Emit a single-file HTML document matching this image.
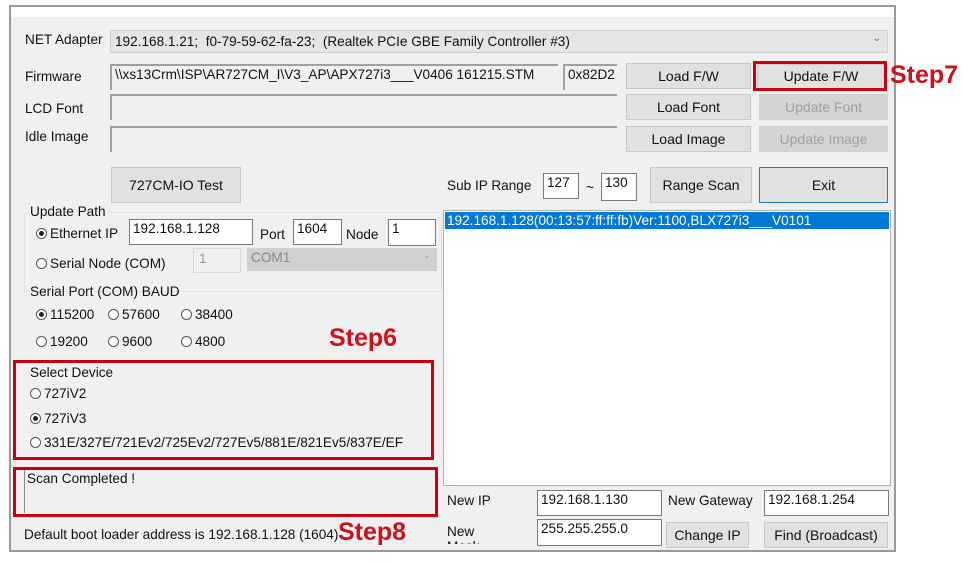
<!DOCTYPE html>
<html><head><meta charset="utf-8"><style>
*{margin:0;padding:0;box-sizing:border-box}
body{width:964px;height:562px;background:#fff;position:relative;overflow:hidden;font-family:"Liberation Sans",sans-serif;font-size:13.6px;color:#111}
.a{position:absolute;white-space:nowrap}
.win{position:absolute;left:9px;top:5px;width:887px;height:547px;border:2px solid #9a9a9a;background:#f0f0f0}
.tb{position:absolute;background:#fff;border:1px solid #7a7a7a;padding:1px 3px;font-size:13.6px}
.ro{position:absolute;background:#f0f0f0;border-top:2px solid #a0a0a0;border-left:2px solid #a0a0a0;padding:1px 3px}
.btn{position:absolute;background:#e1e1e1;border:1px solid #c8c8c8;text-align:center;font-size:14px}
.dis{color:#a0a0a0;background:#d4d4d4;border-color:#d0d0d0}
.r{display:inline-block;width:11px;height:11px;border:1px solid #555;border-radius:50%;vertical-align:-1px;margin-right:3px;position:relative;background:#fff}
.r.on::after{content:"";position:absolute;left:2px;top:2px;width:5px;height:5px;border-radius:50%;background:#222}
.red{position:absolute;border:3px solid #c8000f}
.st{position:absolute;color:#d0101a;font-weight:bold;font-size:25px}
.grp{position:absolute;border:1px solid #e2e2e2}
</style></head><body>
<div class="win"></div>
<div class="a" style="left:11px;top:7px;width:883px;height:10px;background:#fff"></div>
<div class="a" style="left:25px;top:32px">NET Adapter</div>
<div class="a" style="left:110px;top:30px;width:778px;height:23px;background:#e5e5e5;border:1px solid #cfcfcf;padding:3px 4px">192.168.1.21;&nbsp; f0-79-59-62-fa-23;&nbsp; (Realtek PCIe GBE Family Controller #3)<span style="position:absolute;right:6px;top:2px;font-size:10px;color:#666">&#8964;</span></div>
<div class="a" style="left:25px;top:69px">Firmware</div>
<div class="a" style="left:25px;top:101px">LCD Font</div>
<div class="a" style="left:25px;top:129px">Idle Image</div>
<div class="ro" style="left:110px;top:64px;width:448px;height:26px">\\xs13Crm\ISP\AR727CM_I\V3_AP\APX727i3___V0406 161215.STM</div>
<div class="ro" style="left:563px;top:64px;width:54px;height:26px">0x82D2</div>
<div class="ro" style="left:110px;top:94px;width:507px;height:26px"></div>
<div class="ro" style="left:110px;top:126px;width:507px;height:26px"></div>
<div class="btn" style="left:626px;top:63px;width:125px;height:26px;line-height:24px">Load F/W</div>
<div class="btn" style="left:757px;top:64px;width:128px;height:25px;line-height:23px">Update F/W</div>
<div class="red" style="left:753px;top:61px;width:134px;height:30px"></div>
<div class="st" style="left:890px;top:61px">Step7</div>
<div class="btn" style="left:626px;top:94px;width:125px;height:26px;line-height:24px">Load Font</div>
<div class="btn dis" style="left:759px;top:94px;width:129px;height:26px;line-height:24px">Update Font</div>
<div class="btn" style="left:626px;top:126px;width:125px;height:26px;line-height:24px">Load Image</div>
<div class="btn dis" style="left:759px;top:126px;width:129px;height:26px;line-height:24px">Update Image</div>
<div class="btn" style="left:111px;top:167px;width:130px;height:36px;line-height:34px">727CM-IO Test</div>
<div class="a" style="left:447px;top:178px">Sub IP Range</div>
<div class="tb" style="left:543px;top:173px;width:36px;height:26px">127</div>
<div class="a" style="left:586px;top:180px">~</div>
<div class="tb" style="left:601px;top:173px;width:36px;height:28px">130</div>
<div class="btn" style="left:650px;top:167px;width:102px;height:36px;line-height:34px">Range Scan</div>
<div class="btn" style="left:759px;top:167px;width:129px;height:36px;line-height:34px;border:1px solid #1a7ad0">Exit</div>
<div class="a" style="left:443px;top:210px;width:448px;height:276px;background:#fff;border:1px solid #b0b0b0"></div>
<div class="a" style="left:445px;top:212px;width:444px;height:17px;background:#0078d7;color:#fff;padding:1px 2px">192.168.1.128(00:13:57:ff:ff:fb)Ver:1100,BLX727i3___V0101</div>
<div class="grp" style="left:24px;top:212px;width:418px;height:80px"></div>
<div class="a" style="left:30px;top:204px;background:#f0f0f0;padding-right:2px">Update Path</div>
<div class="a" style="left:36px;top:226px"><span class="r on"></span>Ethernet IP</div>
<div class="tb" style="left:129px;top:219px;width:124px;height:26px">192.168.1.128</div>
<div class="a" style="left:260px;top:227px">Port</div>
<div class="tb" style="left:293px;top:219px;width:49px;height:26px">1604</div>
<div class="a" style="left:346px;top:227px">Node</div>
<div class="tb" style="left:388px;top:219px;width:48px;height:27px">1</div>
<div class="a" style="left:36px;top:256px"><span class="r"></span>Serial Node (COM)</div>
<div class="a" style="left:193px;top:248px;width:48px;height:25px;border:1px solid #d8d8d8;color:#999;padding:2px 5px">1</div>
<div class="a" style="left:247px;top:248px;width:190px;height:23px;background:#d0d0d0;color:#888;padding:2px 4px">COM1<span style="position:absolute;right:6px;top:2px;font-size:10px;color:#aaa">&#8964;</span></div>
<div class="a" style="left:30px;top:284px">Serial Port (COM) BAUD</div>
<div class="a" style="left:36px;top:307px"><span class="r on"></span>115200</div>
<div class="a" style="left:108px;top:307px"><span class="r"></span>57600</div>
<div class="a" style="left:181px;top:307px"><span class="r"></span>38400</div>
<div class="a" style="left:36px;top:334px"><span class="r"></span>19200</div>
<div class="a" style="left:108px;top:334px"><span class="r"></span>9600</div>
<div class="a" style="left:181px;top:334px"><span class="r"></span>4800</div>
<div class="st" style="left:329px;top:324px">Step6</div>
<div class="a" style="left:30px;top:365px">Select Device</div>
<div class="a" style="left:30px;top:386px"><span class="r"></span>727iV2</div>
<div class="a" style="left:30px;top:411px"><span class="r on"></span>727iV3</div>
<div class="a" style="left:30px;top:435px"><span class="r"></span>331E/327E/721Ev2/725Ev2/727Ev5/881E/821Ev5/837E/EF</div>
<div class="red" style="left:13px;top:360px;width:421px;height:100px"></div>
<div class="a" style="left:24px;top:470px;width:410px;height:43px;border-left:1px solid #888;padding:1px 2px">Scan Completed !</div>
<div class="red" style="left:13px;top:467px;width:425px;height:50px"></div>
<div class="a" style="left:24px;top:527px">Default boot loader address is 192.168.1.128 (1604)</div>
<div class="st" style="left:338px;top:518px">Step8</div>
<div class="a" style="left:447px;top:493px">New IP</div>
<div class="tb" style="left:537px;top:490px;width:125px;height:26px">192.168.1.130</div>
<div class="a" style="left:668px;top:493px">New Gateway</div>
<div class="tb" style="left:764px;top:490px;width:125px;height:26px">192.168.1.254</div>
<div class="a" style="left:447px;top:524px;height:20px;overflow:hidden">New<br>Mask</div>
<div class="tb" style="left:537px;top:519px;width:125px;height:27px">255.255.255.0</div>
<div class="btn" style="left:666px;top:522px;width:83px;height:26px;line-height:24px">Change IP</div>
<div class="btn" style="left:764px;top:522px;width:124px;height:26px;line-height:24px">Find (Broadcast)</div>
</body></html>
